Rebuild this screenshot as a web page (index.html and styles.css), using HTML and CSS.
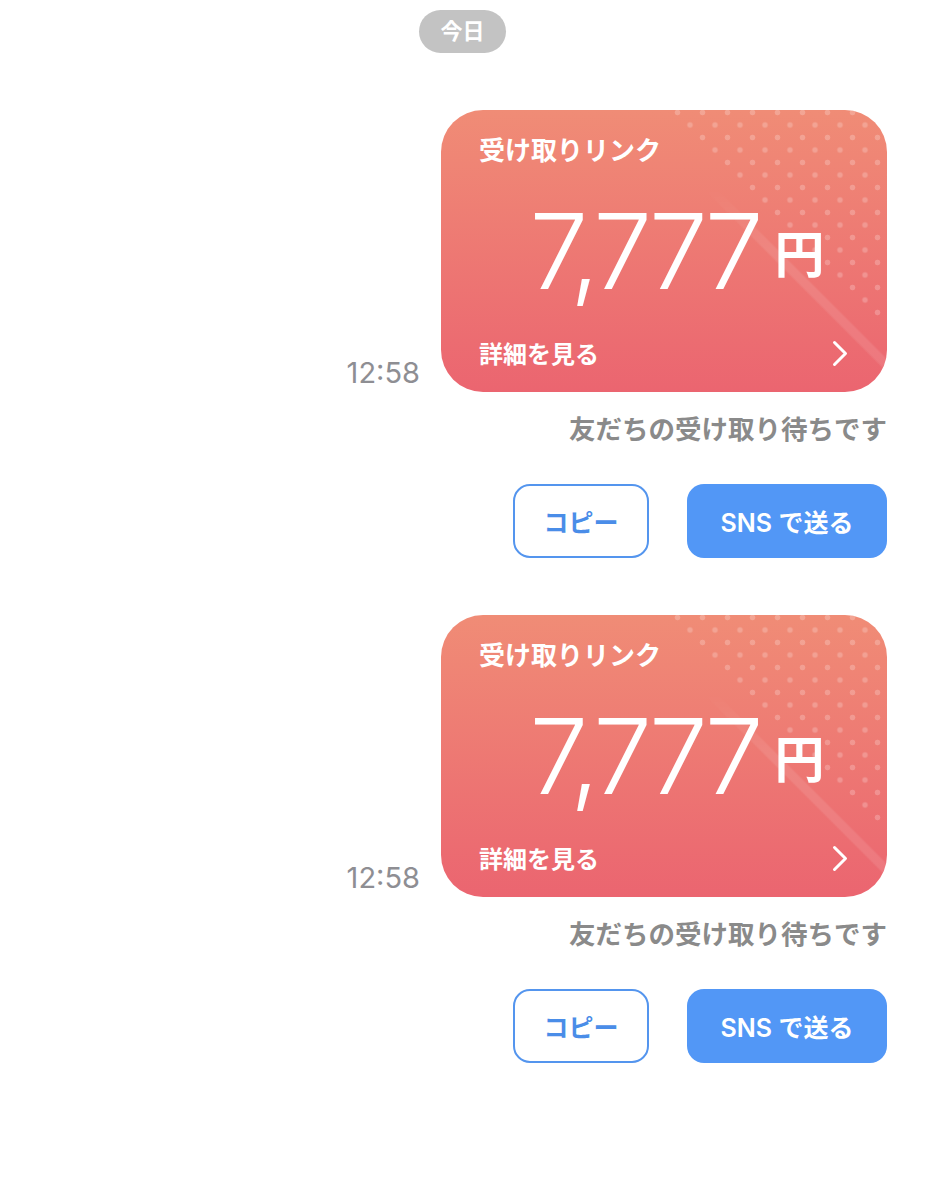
FILE: index.html
```html
<!DOCTYPE html>
<html lang="ja">
<head>
    <meta charset="UTF-8">
    <meta name="viewport" content="width=device-width, initial-scale=1.0">
    <title>受け取りリンク</title>
    <link rel="stylesheet" href="styles.css">
</head>
<body>
<div class="chat">
    <div class="day-pill">今日</div>

    <!-- first link -->
    <div class="link-group">
        <div class="message">
            <span class="time">12:58</span>
            <div class="link-card">
                <div class="card-title">受け取りリンク</div>
                <div class="amount">
                    <span class="amount-num">7,777</span>
                    <span class="amount-unit">円</span>
                </div>
                <div class="card-footer">
                    <span>詳細を見る</span>
                    <svg class="chevron" width="16" height="27" viewBox="0 0 16 27">
                        <polyline points="2.5,2.5 13.5,13.5 2.5,24.5" fill="none" stroke="#fff" stroke-width="3" stroke-linecap="round" stroke-linejoin="round"/>
                    </svg>
                </div>
            </div>
        </div>
        <div class="status">友だちの受け取り待ちです</div>
        <div class="actions">
            <button class="btn btn-outline">コピー</button>
            <button class="btn btn-fill">SNS で送る</button>
        </div>
    </div>

    <!-- second link -->
    <div class="link-group">
        <div class="message">
            <span class="time">12:58</span>
            <div class="link-card">
                <div class="card-title">受け取りリンク</div>
                <div class="amount">
                    <span class="amount-num">7,777</span>
                    <span class="amount-unit">円</span>
                </div>
                <div class="card-footer">
                    <span>詳細を見る</span>
                    <svg class="chevron" width="16" height="27" viewBox="0 0 16 27">
                        <polyline points="2.5,2.5 13.5,13.5 2.5,24.5" fill="none" stroke="#fff" stroke-width="3" stroke-linecap="round" stroke-linejoin="round"/>
                    </svg>
                </div>
            </div>
        </div>
        <div class="status">友だちの受け取り待ちです</div>
        <div class="actions">
            <button class="btn btn-outline">コピー</button>
            <button class="btn btn-fill">SNS で送る</button>
        </div>
    </div>
</div>
</body>
</html>
```

FILE: styles.css
```css
body {
    margin: 0;
    background-color: #fff;
    font-family: "Inter", "Noto Sans CJK JP", sans-serif;
}

.chat {
    display: flex;
    flex-direction: column;
    gap: 57px;
    padding: 10px 38px 0 0;
}

.day-pill {
    align-self: center;
    margin-left: 38px; /* keep it centred on the page */
    height: 43px;
    padding: 0 21px;
    border-radius: 22px;
    background-color: #c3c3c3;
    color: #fff;
    font-size: 22px;
    font-weight: 700;
    line-height: 43px;
}

.link-group {
    display: flex;
    flex-direction: column;
    align-items: flex-end;
}

.message {
    display: flex;
    align-items: flex-end;
    gap: 21px;
}

.time {
    color: #8e8e93;
    font-size: 29px;
    line-height: 29px;
    margin-bottom: 5px;
}

/* the red link card */
.link-card {
    position: relative;
    overflow: hidden;
    width: 446px;
    height: 282px;
    box-sizing: border-box;
    padding: 24px 38px 21px;
    border-radius: 42px;
    background: linear-gradient(to bottom, #f08c76, #eb6570);
    color: #fff;
    display: flex;
    flex-direction: column;
}

/* dotted corner */
.link-card::before {
    content: "";
    position: absolute;
    inset: 0;
    background-image:
        radial-gradient(circle, rgba(255, 255, 255, 0.22) 2.5px, transparent 3.2px),
        radial-gradient(circle, rgba(255, 255, 255, 0.22) 2.5px, transparent 3.2px);
    background-size: 25px 25px;
    background-position: 11.5px 2.5px, 24px 15px;
    -webkit-mask-image: linear-gradient(45deg, transparent 69%, #000 70.5%);
    mask-image: linear-gradient(45deg, transparent 69%, #000 70.5%);
}

/* faint light stripe */
.link-card::after {
    content: "";
    position: absolute;
    inset: 0;
    background: linear-gradient(45deg, transparent 63.8%, rgba(255, 255, 255, 0.1) 64.2%, rgba(255, 255, 255, 0.1) 65.6%, transparent 66%);
    -webkit-mask-image: linear-gradient(to bottom, transparent 28%, #000 50%);
    mask-image: linear-gradient(to bottom, transparent 28%, #000 50%);
}

.card-title {
    font-size: 26px;
    font-weight: 700;
    line-height: 34px;
}

.amount {
    display: flex;
    align-items: center;
    justify-content: center;
    margin-top: 30px;
    padding-left: 26px;
}

.amount-num {
    font-size: 105px;
    font-weight: 300;
    line-height: 106px;
    letter-spacing: -5px;
}

.amount-unit {
    margin-left: 16px;
    margin-top: 8px;
    font-size: 50px;
    font-weight: 700;
    line-height: 52px;
}

.card-footer {
    margin-top: auto;
    display: flex;
    align-items: center;
    justify-content: space-between;
    font-size: 24px;
    font-weight: 700;
    line-height: 32px;
}

.chevron {
    margin-right: 1px;
    margin-top: -3px;
}

.status {
    margin-top: 19px;
    color: #8a8a8a;
    font-size: 26.5px;
    font-weight: 700;
    line-height: 36px;
}

.actions {
    display: flex;
    gap: 38px;
    margin-top: 37px;
}

.btn {
    height: 74px;
    border-radius: 17px;
    font-family: "Inter", "Noto Sans CJK JP", sans-serif;
    font-size: 25px;
    font-weight: 600;
    cursor: pointer;
}

.btn-outline {
    width: 136px;
    background-color: #fff;
    border: 2px solid #5495ee;
    color: #4a8de8;
}

.btn-fill {
    width: 200px;
    background-color: #5297f6;
    border: none;
    color: #fff;
}
```
